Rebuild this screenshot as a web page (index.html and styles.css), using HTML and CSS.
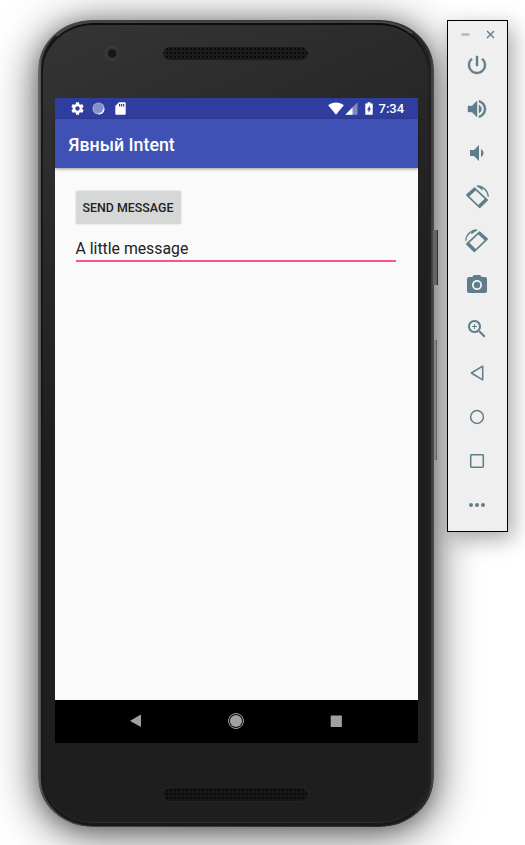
FILE: index.html
```html
<!DOCTYPE html>
<html lang="ru">
<head>
<meta charset="utf-8">
<title>Явный Intent</title>
<link rel="stylesheet" href="styles.css">
</head>
<body>
<main class="stage">
  <section class="phone">
    <i class="side-key power-key"></i>
    <i class="side-key volume-key"></i>
    <div class="face">
      <div class="top-bezel"><i class="camera"></i><i class="speaker"></i></div>
      <div class="screen">
        <div class="status">
          <svg class="s-gear" width="15" height="15" viewBox="0 0 24 24"><path d="M19.43 12.98c.04-.32.07-.64.07-.98s-.03-.66-.07-.98l2.11-1.65c.19-.15.24-.42.12-.64l-2-3.46c-.12-.22-.39-.3-.61-.22l-2.49 1c-.52-.4-1.080-.73-1.690-.98l-.38-2.650C14.460 2.180 14.250 2 14 2h-4c-.25 0-.46.18-.49.42l-.38 2.650c-.61.25-1.170.59-1.690.98l-2.490-1c-.23-.09-.49 0-.61.22l-2 3.460c-.13.22-.07.49.12.64l2.110 1.650c-.04.32-.07.65-.07.98s.03.66.07.98l-2.110 1.650c-.19.15-.24.42-.12.64l2 3.460c.12.22.39.3.61.22l2.490-1c.52.4 1.080.73 1.690.98l.38 2.650c.03.24.24.42.49.42h4c.25 0 .46-.18.49-.42l.38-2.650c.61-.25 1.170-.59 1.690-.98l2.490 1c.23.09.49 0 .61-.22l2-3.460c.12-.22.07-.49-.12-.64l-2.110-1.650zM12 15.500c-1.930 0-3.500-1.570-3.500-3.500s1.570-3.500 3.500-3.500 3.500 1.570 3.500 3.500-1.570 3.500-3.500 3.500z"/></svg>
          <svg class="s-sync" width="13" height="13" viewBox="0 0 13 13"><circle cx="6.500" cy="6.500" r="6" fill="#a5addb"/><circle cx="6.200" cy="6" r="4.800" fill="#8590cb"/><path d="M12 6.800A5.600 5.600 0 0 1 6.800 12" fill="none" stroke="#fff" stroke-width="1.200"/></svg>
          <svg class="s-card" width="11" height="13" viewBox="0 0 11 13"><path fill-rule="evenodd" d="M4 .3h5.700q1 0 1 1v10.400q0 1-1 1H1.300q-1 0-1-1V4zM4 2v2.400h1.200V2zm2 0v2.400h1.200V2zm2 0v2.400h1.200V2z"/></svg>
          <span class="grow"></span>
          <svg class="s-wifi" width="16" height="13" viewBox="0 0 16 13"><path d="M.2 3.300C4.500-.5 11.500-.5 15.800 3.300L8 12.800z"/></svg>
          <svg class="s-cell" width="13" height="13" viewBox="0 0 13 13"><path d="M12.500.300v12.400H.300z" opacity=".4"/><path d="M7.500 5.400v7.300H.300z"/></svg>
          <svg class="s-batt" width="8" height="13" viewBox="0 0 8 13"><path fill-rule="evenodd" d="M2.500.200h3v1.300h2.200v11.200H.300V1.500h2.200zM4.800 3.500L2 7.700h1.500v3L6.100 6.500H4.800z"/></svg>
          <span class="clock">7:34</span>
        </div>
        <header class="app-bar">Явный Intent</header>
        <div class="content">
          <button class="send">SEND MESSAGE</button>
          <div class="field">A little message</div>
        </div>
        <nav class="nav">
          <svg width="20" height="20" viewBox="0 0 20 20"><path d="M4.600 9.500l9.800-5.700q.6-.2.600.5v11.100q0 .6-.6.400L4.600 10.200q-.5-.3 0-.7z"/></svg>
          <svg width="20" height="20" viewBox="0 0 20 20"><circle cx="10" cy="10" r="6.100"/><circle cx="10" cy="10" r="7.500" fill="none" stroke="#a0a0a0" stroke-width="1"/></svg>
          <svg width="20" height="20" viewBox="0 0 20 20"><rect x="4.700" y="4.500" width="11.200" height="11.500" rx=".6"/></svg>
        </nav>
      </div>
      <div class="bottom-bezel"><i class="speaker"></i></div>
    </div>
  </section>
  <aside class="tools">
    <div class="window">
      <svg width="9" height="9" viewBox="0 0 9 9"><path d="M.5 4.500h8" stroke="#9db0b8" stroke-width="2"/></svg>
      <svg width="9" height="9" viewBox="0 0 9 9"><path d="M1 1l7 7M8 1L1 8" stroke="#607d8b" stroke-width="1.400"/></svg>
    </div>
    <div class="tool bold"><svg viewBox="0 0 24 24"><path d="M13 3h-2v10h2V3zm4.830 2.170l-1.420 1.420C17.990 7.860 19 9.810 19 12c0 3.870-3.130 7-7 7s-7-3.130-7-7c0-2.190 1.010-4.140 2.580-5.420L6.170 5.170C4.230 6.820 3 9.260 3 12c0 4.970 4.030 9 9 9s9-4.030 9-9c0-2.740-1.230-5.180-3.170-6.830z"/></svg></div>
    <div class="tool bold"><svg viewBox="0 0 24 24"><path d="M3 9v6h4l5 5V4L7 9H3zm13.500 3c0-1.770-1.020-3.290-2.500-4.030v8.050c1.480-.73 2.500-2.250 2.500-4.020zM14 3.230v2.060c2.890.860 5 3.540 5 6.710s-2.110 5.850-5 6.710v2.060c4.010-.910 7-4.490 7-8.770s-2.990-7.860-7-8.770z"/></svg></div>
    <div class="tool"><svg viewBox="0 0 24 24"><path d="M18.500 12c0-1.770-1.020-3.290-2.500-4.030v8.050c1.480-.73 2.500-2.250 2.500-4.020zM5 9v6h4l5 5V4L9 9H5z"/></svg></div>
    <div class="tool"><svg viewBox="0 0 24 24"><g id="tilt"><path fill-rule="evenodd" d="M8.700 2.700q.8-.7 1.600 0L22.600 14.200q.8.800 0 1.600l-7.100 7q-.8.800-1.600 0L1.400 10.800q-.8-.8 0-1.600zM10.700 5.400L4.400 11.200l8.900 8.900 6.300-6.300z"/><path d="M12 1.300C17.500.6 22.700 5 23.300 11.800" fill="none" stroke="#607d8b" stroke-width="1.300"/><path d="M11 .8h5l2.300 3.500-1.200.6z"/></g></svg></div>
    <div class="tool"><svg class="mirrored" viewBox="0 0 24 24"><use href="#tilt"/></svg></div>
    <div class="tool"><svg viewBox="0 0 24 24"><circle cx="12" cy="12" r="3.200"/><path d="M9 2L7.170 4H4c-1.100 0-2 .9-2 2v12c0 1.100.9 2 2 2h16c1.100 0 2-.9 2-2V6c0-1.100-.9-2-2-2h-3.170L15 2H9zm3 15c-2.760 0-5-2.240-5-5s2.240-5 5-5 5 2.240 5 5-2.240 5-5 5z"/></svg></div>
    <div class="tool"><svg viewBox="0 0 24 24"><path d="M15.500 14h-.79l-.28-.27C15.410 12.590 16 11.110 16 9.500 16 5.910 13.090 3 9.500 3S3 5.910 3 9.500 5.910 16 9.500 16c1.610 0 3.090-.59 4.230-1.570l.27.28v.79l5 4.990L20.490 19l-4.990-5zm-6 0C7.010 14 5 11.990 5 9.500S7.010 5 9.500 5 14 7.010 14 9.500 11.990 14 9.500 14zM12 10h-2v2H9v-2H7V9h2V7h1v2h2v1z"/></svg></div>
    <div class="tool outline"><svg viewBox="0 0 24 24"><path d="M17.700 5.200v13.600L6.300 12z"/></svg></div>
    <div class="tool outline"><svg viewBox="0 0 24 24"><circle cx="12" cy="12" r="6.400"/></svg></div>
    <div class="tool outline"><svg viewBox="0 0 24 24"><rect x="5.700" y="5.700" width="12.600" height="12.600" rx=".7"/></svg></div>
    <div class="tool"><svg viewBox="0 0 24 24"><circle cx="6" cy="12" r="2"/><circle cx="12" cy="12" r="2"/><circle cx="18" cy="12" r="2"/></svg></div>
  </aside>
</main>
</body>
</html>
```
FILE: styles.css
```css
* { box-sizing: border-box; }
body { margin: 0; background: #fff; font-family: Roboto, sans-serif; overflow: hidden; }
.stage { display: flex; align-items: flex-start; gap: 13px; height: 845px; padding: 20px 17px 0 38px; overflow: hidden; }
svg { display: block; flex: none; }

.phone {
  position: relative; z-index: 0; flex: none; width: 396px; height: 807px; padding: 1px 3px 1px 3px;
  border-radius: 54px / 50px;
  background: linear-gradient(90deg, #6c6c6c 0, #4a4a4a 4px, #3a3a3a 50%, #302e2f 390px, #4c4c4c 396px);
  box-shadow: 0 6px 44px 2px rgba(0,0,0,.6), 0 3px 18px rgba(0,0,0,.22);
}
.face {
  display: flex; flex-direction: column; align-items: center; height: 805px; padding: 3px 0 0 1px;
  border: solid #181818; border-width: 2px 3px 3px 2px; border-top-color: #444; border-right-color: #232122;
  border-radius: 52px / 48px;
  background: linear-gradient(155deg, #353535 0, #292929 22%, #1e1e1e 45%, #1e1e1e 100%);
  box-shadow: inset 0 2px 0 #0d0d0d, inset 0 -1px 0 #303030;
}
.top-bezel { display: flex; width: 363px; height: 72px; padding: 20px 0 0 49px; }
.camera {
  width: 15px; height: 15px; border-radius: 50%;
  background: radial-gradient(circle at 55% 50%, #17141c 0 3px, #2a282d 4.500px, #3b3b3b 6px 7px, #333 8px);
}
.speaker {
  width: 145px; height: 13px; border-radius: 7px;
  background: radial-gradient(circle, #0b0b0b 0 .7px, transparent 1.200px) 2px 0 / 4px 4px, #1b1b1b;
  box-shadow: 0 0 1px #3a3a3a;
}
.top-bezel .speaker { margin: 1px 0 0 44px; }
.bottom-bezel { width: 363px; padding: 45px 0 0 108px; }
.bottom-bezel .speaker { display: block; background-color: #161616; box-shadow: 0 0 1px #484848; }
.side-key { position: absolute; z-index: -1; }
.power-key { right: -4px; top: 210px; width: 5px; height: 55px; background: linear-gradient(90deg, #666 0 4px, #333 4px); }
.volume-key { right: -3px; top: 320px; width: 3px; height: 120px; background: linear-gradient(90deg, #888 0 2px, #666 2px); }

.screen { display: flex; flex-direction: column; flex: none; width: 363px; height: 645px; background: #fafafa; }
.status { display: flex; align-items: center; height: 21px; padding: 0 14px 0 15px; background: #2f3e9e; color: #fff; fill: #fff; }
.s-sync { margin-left: 7px; }
.s-card { margin-left: 10px; }
.grow { flex: 1; }
.s-cell { margin-left: 1px; }
.s-batt { margin-left: 7px; }
.clock { margin-left: 6px; font-size: 13px; font-weight: 500; line-height: 21px; width: 25px; white-space: nowrap; }
.app-bar {
  height: 49px; padding-left: 14px; background: #4051b5; color: #fff;
  font-size: 17.800px; font-weight: 500; line-height: 51px; box-shadow: 0 1px 3px rgba(0,0,0,.4);
}
.content { flex: 1; padding: 23px 22px 0 21px; }
.send {
  display: block; width: 105px; height: 33px; padding: 0; border: 0; border-radius: 2px;
  background: #d6d7d7; color: #222; font: 500 12.400px/33px Roboto, sans-serif;
  box-shadow: 0 0 2px rgba(0,0,0,.2); white-space: nowrap;
}
.field { height: 38px; border-bottom: 2px solid #fa5589; color: #222; font-size: 15.800px; line-height: 49px; }
.nav { display: flex; justify-content: center; gap: 80px; height: 43px; padding-top: 11px; background: #000; fill: #a0a0a0; }

.tools {
  position: relative; z-index: 1; flex: none; width: 61px; height: 512px; border: 1px solid #000;
  background: #efefef; box-shadow: 5px 7px 22px rgba(0,0,0,.35);
}
.window { display: flex; justify-content: center; gap: 16px; height: 22px; padding: 9px 0 0; }
.tool { display: flex; align-items: center; justify-content: center; height: 44px; padding-right: 1px; fill: #607d8b; }
.tool svg { width: 24px; height: 24px; }
.tool .mirrored { transform: scaleX(-1); }
.bold svg { stroke: #607d8b; stroke-width: .4; }
.outline svg { fill: none; stroke: #607d8b; stroke-width: 1.500; stroke-linejoin: round; }
```
